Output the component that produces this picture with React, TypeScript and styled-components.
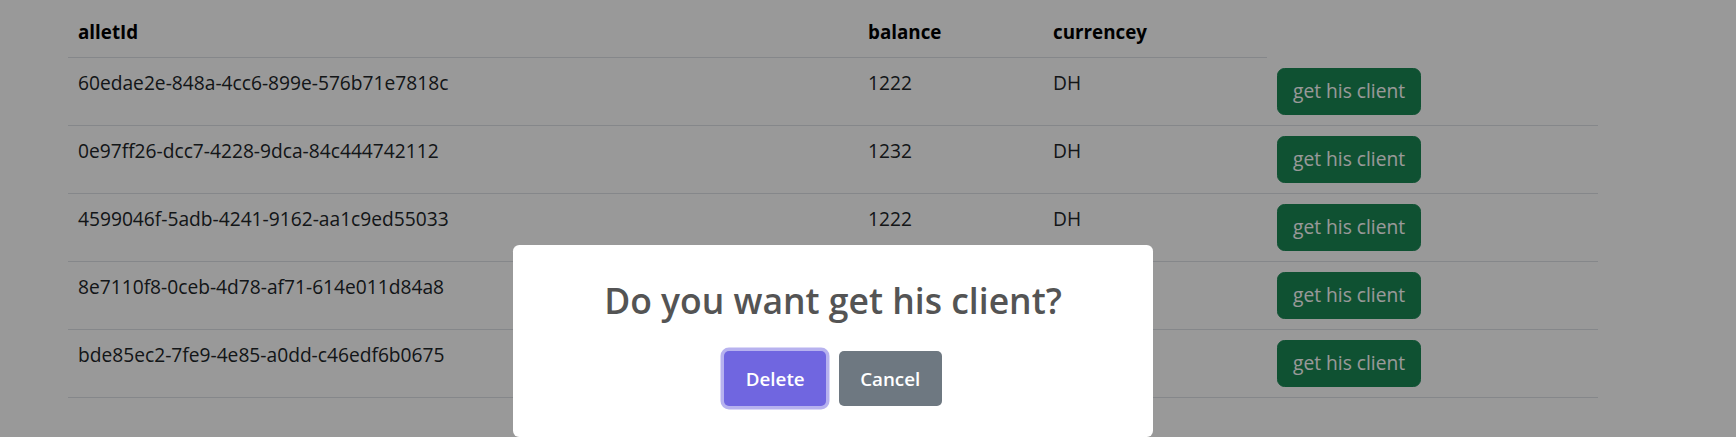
import React from "react";
import styled, { createGlobalStyle } from "styled-components";

const GlobalStyle = createGlobalStyle`
  html, body {
    margin: 0;
    padding: 0;
    background: #ffffff;
    font-family: "Open Sans", "Noto Sans", Arial, sans-serif;
    color: #212529;
  }
  * { box-sizing: border-box; }
`;

const Page = styled.div`
  padding: 7px 0 0 68px;
  min-height: 437px;
`;

const Table = styled.table`
  width: 1530px;
  border-collapse: collapse;
  table-layout: fixed;
  font-size: 19.2px;
`;

const Col = styled.col<{ $w: number }>`
  width: ${(p) => p.$w}px;
`;

const HeadCell = styled.th`
  padding: 10px;
  line-height: 30px;
  font-weight: 700;
  font-size: 18.8px;
  color: #000;
  text-align: left;
  vertical-align: top;
  border-bottom: 1px solid #dee2e6;
`;

const Cell = styled.td`
  padding: 10px;
  line-height: 30px;
  vertical-align: top;
  border-bottom: 1px solid #dee2e6;
`;

const ActionButton = styled.button`
  display: inline-flex;
  align-items: center;
  vertical-align: top;
  height: 47px;
  padding: 0 15px;
  border: 1px solid #198754;
  border-radius: 7.5px;
  background: #198754;
  color: #ffffff;
  font-family: inherit;
  font-size: 19.2px;
  line-height: 30px;
  cursor: pointer;
`;

const Overlay = styled.div`
  position: fixed;
  inset: 0;
  background: rgba(0, 0, 0, 0.4);
  z-index: 10;
`;

const Popup = styled.div`
  position: absolute;
  left: 513px;
  top: 245px;
  width: 640px;
  display: flex;
  flex-direction: column;
  padding: 0 0 24px;
  background: #ffffff;
  border-radius: 6.25px;
  color: #545454;
`;

const Title = styled.h2`
  margin: 0;
  padding: 30px 37px 0;
  font-size: 35.5px;
  font-weight: 600;
  line-height: 50px;
  text-align: center;
  color: #545454;
`;

const Actions = styled.div`
  display: flex;
  justify-content: center;
  align-items: center;
  margin-top: 20px;
`;

const DialogButton = styled.button<{ $variant: "confirm" | "cancel" }>`
  margin: 6.25px;
  padding: 12.5px 21.5px;
  border: 0;
  border-radius: 5px;
  font-family: inherit;
  font-size: 18.8px;
  font-weight: 600;
  line-height: 30px;
  color: #ffffff;
  background: ${(p) => (p.$variant === "confirm" ? "#7066e0" : "#6e7881")};
  box-shadow: ${(p) =>
    p.$variant === "confirm" ? "0 0 0 3.5px rgba(112, 102, 224, 0.5)" : "none"};
  cursor: pointer;
`;

const wallets = [
  { id: "60edae2e-848a-4cc6-899e-576b71e7818c", balance: 1222, currency: "DH" },
  { id: "0e97ff26-dcc7-4228-9dca-84c444742112", balance: 1232, currency: "DH" },
  { id: "4599046f-5adb-4241-9162-aa1c9ed55033", balance: 1222, currency: "DH" },
  { id: "8e7110f8-0ceb-4d78-af71-614e011d84a8", balance: 1222, currency: "DH" },
  { id: "bde85ec2-7fe9-4e85-a0dd-c46edf6b0675", balance: 1222, currency: "DH" },
];

export default function App() {
  return (
    <>
      <GlobalStyle />
      <Page>
        <Table>
          <colgroup>
            <Col $w={790} />
            <Col $w={185} />
            <Col $w={224} />
            <Col $w={331} />
          </colgroup>
          <thead>
            <tr>
              <HeadCell>alletId</HeadCell>
              <HeadCell>balance</HeadCell>
              <HeadCell>currencey</HeadCell>
            </tr>
          </thead>
          <tbody>
            {wallets.map((w) => (
              <tr key={w.id}>
                <Cell>{w.id}</Cell>
                <Cell>{w.balance}</Cell>
                <Cell>{w.currency}</Cell>
                <Cell>
                  <ActionButton>get his client</ActionButton>
                </Cell>
              </tr>
            ))}
          </tbody>
        </Table>
      </Page>
      <Overlay>
        <Popup role="dialog">
          <Title>Do you want get his client?</Title>
          <Actions>
            <DialogButton $variant="confirm">Delete</DialogButton>
            <DialogButton $variant="cancel">Cancel</DialogButton>
          </Actions>
        </Popup>
      </Overlay>
    </>
  );
}
